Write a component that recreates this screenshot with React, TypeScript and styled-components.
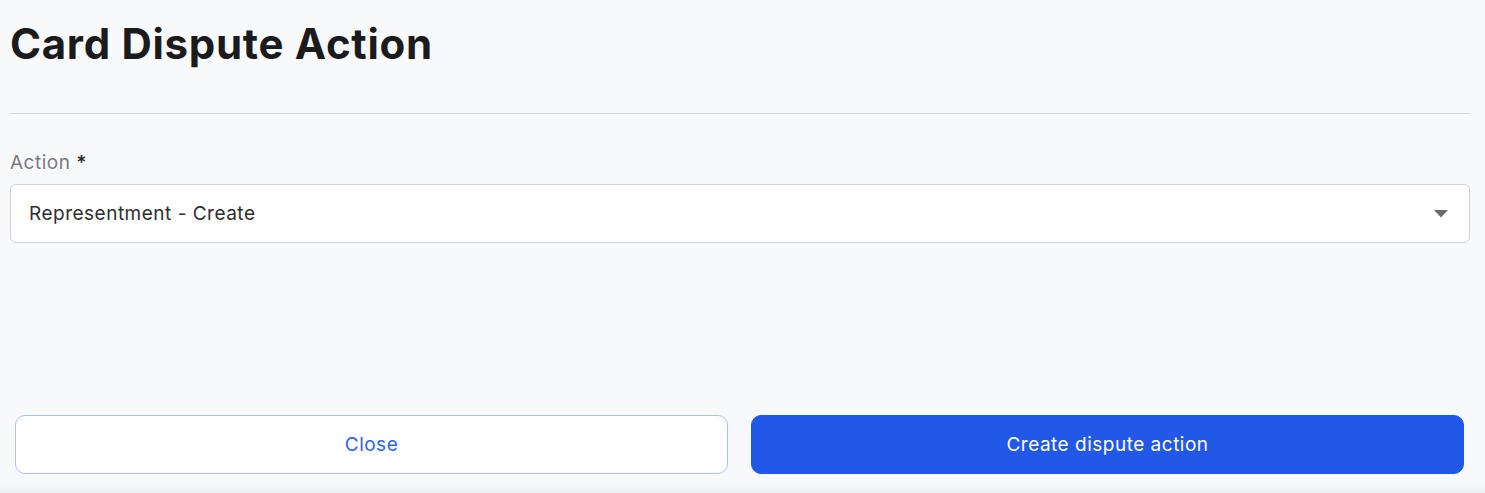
import styled, { createGlobalStyle } from 'styled-components';

const GlobalStyle = createGlobalStyle`
    html, body {
        margin: 0;
        padding: 0;
        background: #f8f9fb;
        font-family: Inter, "Noto Sans", "Liberation Sans", sans-serif;
    }
    * {
        box-sizing: border-box;
    }
`;

const CaretIcon = () => (
    <svg width="14" height="8" viewBox="0 0 14 8" aria-hidden="true">
        <path d="M0 0 H14 L7 7.5 Z" fill="#6b6b6b" />
    </svg>
);

export default function App() {
    return (
        <Page>
            <GlobalStyle />
            <Header>
                <Title>Card Dispute Action</Title>
            </Header>
            <Divider />
            <Body>
                <Label>
                    Action <Required>*</Required>
                </Label>
                <Select>
                    <SelectValue>Representment - Create</SelectValue>
                    <CaretIcon />
                </Select>
            </Body>
            <Footer>
                <Button variant="outline">Close</Button>
                <Button variant="primary">Create dispute action</Button>
            </Footer>
        </Page>
    );
}

const Page = styled.div`
    width: 1485px;
    height: 493px;
    display: flex;
    flex-direction: column;
    background: #f8f9fb;
`;

const Header = styled.div`
    padding: 19px 10px 0 10px;
    height: 113px;
`;

const Title = styled.h1`
    margin: 0;
    font-size: 42px;
    line-height: 50px;
    font-weight: 700;
    letter-spacing: 0.7px;
    color: #1b1b1d;
`;

const Divider = styled.hr`
    margin: 0 15px 0 10px;
    border: none;
    border-top: 1px solid #d6d7df;
`;

const Body = styled.div`
    flex: 1;
    padding: 37px 15px 0 10px;
    display: flex;
    flex-direction: column;
    gap: 9px;
`;

const Label = styled.div`
    font-size: 19px;
    line-height: 24px;
    letter-spacing: 0.5px;
    color: #7a7a7e;
`;

const Required = styled.span`
    color: #2a2a2d;
    font-weight: 600;
`;

const Select = styled.div`
    height: 59px;
    background: #ffffff;
    border: 1px solid #d2d2d6;
    border-radius: 6px;
    display: flex;
    align-items: center;
    justify-content: space-between;
    padding: 0 21px 0 18px;
`;

const SelectValue = styled.span`
    font-size: 19px;
    letter-spacing: 0.5px;
    color: #2e2e31;
`;

const Footer = styled.div`
    display: grid;
    grid-template-columns: 1fr 1fr;
    gap: 23px;
    padding: 0 21px 19px 15px;
    background: linear-gradient(to bottom, #f8f9fb 85%, #eef0f2 100%);
`;

const Button = styled.button<{ variant: 'outline' | 'primary' }>`
    height: 59px;
    border-radius: 10px;
    font-family: inherit;
    font-size: 19px;
    font-weight: 400;
    letter-spacing: 0.5px;
    cursor: pointer;
    border: 1px solid ${({ variant }) => (variant === 'primary' ? '#2158e8' : '#a9c1fa')};
    background: ${({ variant }) => (variant === 'primary' ? '#2158e8' : '#ffffff')};
    color: ${({ variant }) => (variant === 'primary' ? '#ffffff' : '#2f63ea')};
`;
